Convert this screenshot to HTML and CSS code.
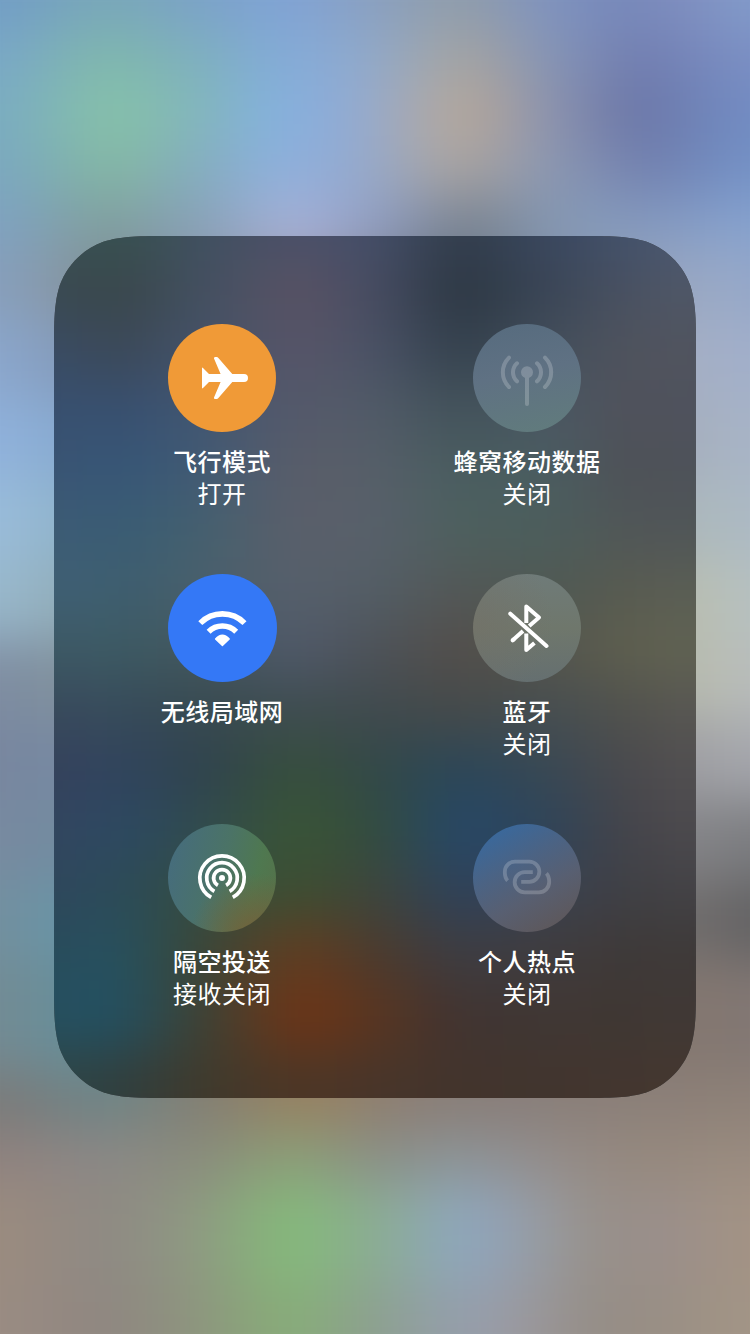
FILE: index.html
```html
<!DOCTYPE html>
<html lang="zh-CN">

<head>
    <meta charset="UTF-8" />
    <meta name="viewport" content="width=device-width, initial-scale=1.0" />
    <title>控制中心</title>
    <link rel="stylesheet" href="styles.css">
</head>

<body>
    <div class="backdrop">
        <div class="bands wallpaper">
            <div class="w1"></div>
            <div class="w2"></div>
            <div class="w3"></div>
            <div class="w4"></div>
            <div class="w5"></div>
            <div class="w6"></div>
            <div class="w7"></div>
            <div class="w8"></div>
            <div class="w9"></div>
            <div class="w10"></div>
            <div class="w11"></div>
            <div class="w12"></div>
            <div class="w13"></div>
            <div class="w14"></div>
            <div class="w15"></div>
            <div class="w16"></div>
            <div class="w17"></div>
            <div class="w18"></div>
            <div class="w19"></div>
        </div>
    </div>
    <div class="panel">
        <div class="bands tint">
            <div class="t1"></div>
            <div class="t2"></div>
            <div class="t3"></div>
            <div class="t4"></div>
            <div class="t5"></div>
            <div class="t6"></div>
            <div class="t7"></div>
            <div class="t8"></div>
            <div class="t9"></div>
            <div class="t10"></div>
            <div class="t11"></div>
            <div class="t12"></div>
            <div class="t13"></div>
            <div class="t14"></div>
            <div class="t15"></div>
        </div>
        <div class="controls">
            <div class="item">
                <div class="circle airplane">
                    <svg viewBox="0 0 108 108">
                        <path fill="#fff" d="M34 44.2Q34 43 35 43.9L41 50H52.6L46 34.6Q45.6 33 47.2 33H48.6Q49.7 33 50.4 33.9L64.3 50H76A4 4 0 0 1 76 58H64.3L50.4 74.1Q49.7 75 48.6 75H47.2Q45.6 75 46 73.4L52.6 58H41L35 64.1Q34 65 34 63.8Z" />
                    </svg>
                </div>
                <p class="name">飞行模式</p>
                <p class="state">打开</p>
            </div>
            <div class="item">
                <div class="circle cellular">
                    <svg viewBox="0 0 108 108" fill="none" stroke="#fff" stroke-width="4" stroke-linecap="round">
                        <g class="dim">
                            <circle cx="54" cy="48.3" r="4" />
                            <path d="M54 52V80M44 39.3A12.1 12.1 0 0 0 44 57.3M64 39.3A12.1 12.1 0 0 1 64 57.3M36 33.6A20.6 20.6 0 0 0 36 63M72 33.6A20.6 20.6 0 0 1 72 63" />
                            <circle cx="54" cy="48.3" r="2.5" fill="#fff" />
                        </g>
                    </svg>
                </div>
                <p class="name">蜂窝移动数据</p>
                <p class="state">关闭</p>
            </div>
            <div class="item">
                <div class="circle wifi">
                    <svg viewBox="0 0 109 108" fill="none" stroke="#fff" stroke-width="5.6">
                        <path d="M32.3 49.1A31 31 0 0 1 76.5 49.1M40.6 57.7A19.6 19.6 0 0 1 68.2 57.7" />
                        <path fill="#fff" stroke-width="1.4" stroke-linejoin="round" d="M47.6 65Q54.4 57.2 61.2 65L54.4 71.4Z" />
                    </svg>
                </div>
                <p class="name">无线局域网</p>
            </div>
            <div class="item">
                <div class="circle bluetooth">
                    <svg viewBox="0 0 108 108" fill="none" stroke="#fff" stroke-width="4" stroke-linejoin="round">
                        <path stroke-linecap="round" d="M37.3 39.7L73.5 72M39.7 66.3L41 65.1" />
                        <path d="M53.3 49V32.4L66 43.4L56.2 51.9M53.3 59.5V76.1L61.4 69.1M39.7 66.3L50 57.1" />
                    </svg>
                </div>
                <p class="name">蓝牙</p>
                <p class="state">关闭</p>
            </div>
            <div class="item">
                <div class="circle airdrop">
                    <svg viewBox="0 0 108 108" fill="none" stroke="#fff" stroke-width="3.7">
                        <circle cx="54" cy="54" r="3" fill="#fff" stroke="none" />
                        <path d="M43.2 73.4A22.2 22.2 0 1 1 64.8 73.4M46.4 67.3A15.3 15.3 0 1 1 61.6 67.3M49.9 61.3A8.4 8.4 0 1 1 58.1 61.3" />
                    </svg>
                </div>
                <p class="name">隔空投送</p>
                <p class="state">接收关闭</p>
            </div>
            <div class="item">
                <div class="circle hotspot">
                    <svg viewBox="0 0 108 108" fill="none" stroke="#fff" stroke-width="3.8">
                        <g class="dim">
                            <path d="M34.6 56.6C32.5 54.4 31.8 51.4 31.8 47.9A10.2 10.2 0 0 1 42 37.7H56.3A10.05 10.05 0 0 1 56.3 57.8H48.2" />
                            <path transform="rotate(180 54 53)" d="M34.6 56.6C32.5 54.4 31.8 51.4 31.8 47.9A10.2 10.2 0 0 1 42 37.7H56.3A10.05 10.05 0 0 1 56.3 57.8H48.2" />
                        </g>
                    </svg>
                </div>
                <p class="name">个人热点</p>
                <p class="state">关闭</p>
            </div>
        </div>
    </div>
</body>

</html>
```
FILE: styles.css
```css
* {
    margin: 0;
    padding: 0;
    box-sizing: border-box;
}

body {
    position: relative;
    width: 750px;
    height: 1334px;
    padding: 236px 54px;
    overflow: hidden;
    background: #8a8f98;
    font-family: "Noto Sans CJK SC", sans-serif;
    color: white;
}

.backdrop {
    position: absolute;
    top: 0;
    left: 0;
    width: 100%;
    height: 100%;
    overflow: hidden;
}

/* stacked colour bands, wider than the parent so the blurred rim stays hidden */
.bands {
    position: absolute;
    top: -60px;
    bottom: -60px;
    left: -8.14%;
    right: -8.14%;
    display: flex;
    flex-direction: column;
    filter: blur(26px);
}

.wallpaper div {
    height: 80px;
}

.wallpaper .w1 {
    height: 90px;
    background: linear-gradient(90deg, #729dc6 7%, #79a8b8 20%, #7ba2c8 30%, #80a3d6 40%, #88a0c4 48%, #909da9 59.5%, #7f93c0 70%, #7688ba 78%, #808fc0 86%, #829cca 93%);
}

.wallpaper .w2 {
    height: 55px;
    background: linear-gradient(90deg, #7aa8c7 7%, #80b8ab 19%, #7eb0bd 29.5%, #83abd8 39%, #8daad0 47.4%, #a6a4a0 60.3%, #8494b6 70.5%, #717db0 80%, #7b8fc4 93%);
}

.wallpaper .w3 {
    height: 55px;
    background: linear-gradient(90deg, #7aacc1 7%, #87c3a8 20%, #82b6bb 30%, #83b2df 38%, #90aad6 46.6%, #b9a896 60.3%, #8c93ae 70%, #6a75a6 79.5%, #728cc3 93%);
}

.wallpaper .w4 {
    height: 55px;
    background: linear-gradient(90deg, #7ba8c0 7%, #84b8a2 20%, #84adc0 30%, #8db0de 39%, #93aad0 47.4%, #aba49f 59.5%, #8c98b2 70%, #717fae 81%, #7391c6 93%);
}

.wallpaper .w5 {
    height: 55px;
    background: linear-gradient(90deg, #7fa2c2 7%, #809f9d 19%, #87a1b8 30%, #a7b2da 40.5%, #8e9cc0 51%, #79828e 60.3%, #8599b5 71.5%, #8399c0 82.7%, #86a2cf 93%);
}

.wallpaper .w6 {
    height: 70px;
    background: linear-gradient(90deg, #879fbc 7%, #8795a0 15.6%, #7c8a90 19%, #8e98ae 31%, #a59fb4 41.4%, #65727f 58.6%, #8998b0 72.4%, #9ba9c4 87%, #94a7c9 93%);
}

.wallpaper .w7 {
    background: linear-gradient(90deg, #8ba7cd 7%, #8399b8 15.6%, #a5afc4 87%, #a1afcb 93%);
}

.wallpaper .w8 {
    background: linear-gradient(90deg, #90b2dc 7%, #86a9cf 15.6%, #a6afbd 87%, #a8b5c8 93%);
}

.wallpaper .w9 {
    background: linear-gradient(90deg, #9abddb 7%, #8eb2c9 15.6%, #adb8bb 87%, #acbac5 93%);
}

.wallpaper .w10 {
    background: linear-gradient(90deg, #99b8cc 7%, #90acb7 15.6%, #b9beb0 87%, #b6c1c2 93%);
}

.wallpaper .w11 {
    background: linear-gradient(90deg, #7f8da2 7%, #80929c 15.6%, #b8bbae 87%, #b8bdbc 93%);
}

.wallpaper .w12 {
    background: linear-gradient(90deg, #78869f 7%, #7689a2 15.6%, #a0a0a4 87%, #a5a7ad 93%);
}

.wallpaper .w13 {
    background: linear-gradient(90deg, #788aa0 7%, #718ba0 15.6%, #848487 87%, #7b7c80 93%);
}

.wallpaper .w14 {
    background: linear-gradient(90deg, #73909f 7%, #6695a8 15.6%, #706c6b 87%, #626264 93%);
}

.wallpaper .w15 {
    height: 110px;
    background: linear-gradient(90deg, #738b94 7%, #61909c 19%, #7f7b70 29.4%, #98785f 41.4%, #88807c 58.6%, #83766f 87%, #827874 93%);
}

.wallpaper .w16 {
    height: 60px;
    background: linear-gradient(90deg, #7b7a79 7%, #6e8486 19%, #837f74 30%, #98835f 42%, #8c7e74 52.6%, #887e7a 63%, #8e8178 93%);
}

.wallpaper .w17 {
    height: 55px;
    background: linear-gradient(90deg, #90827f 7%, #8b8886 19%, #8a8c7c 30%, #8ba078 40.5%, #8b8f86 50%, #8c9498 59.5%, #948c89 70.6%, #95887d 80%, #9a8c80 93%);
}

.wallpaper .w18 {
    height: 100px;
    background: linear-gradient(90deg, #9b8b7f 7%, #8e8984 19%, #8f9782 28.5%, #84bb79 40.5%, #8bad8f 49%, #8ea6c0 60.3%, #979ba2 69%, #979089 75%, #998e8b 81.8%, #a39384 93%);
}

.wallpaper .w19 {
    flex: 1;
    background: linear-gradient(90deg, #9a8c82 7%, #8f8681 19%, #8e937f 28.5%, #87ae78 40.5%, #8ca08d 49%, #959eae 60.3%, #9b9aa0 66.3%, #958e88 74%, #988e84 81.8%, #a39586 93%);
}

.panel {
    position: relative;
    width: 642px;
    height: 862px;
    overflow: hidden;
    background: #46494c;
    clip-path: path("M119.2 0H522.8C557.1 0 574.3 0 592.7 5.8C612.9 13.2 628.8 29.1 636.2 49.3C642 67.7 642 84.9 642 119.2V742.8C642 777.1 642 794.3 636.2 812.7C628.8 832.9 612.9 848.8 592.7 856.2C574.3 862 557.1 862 522.8 862H119.2C84.9 862 67.7 862 49.3 856.2C29.1 848.8 13.2 832.9 5.8 812.7C0 794.3 0 777.1 0 742.8V119.2C0 84.9 0 67.7 5.8 49.3C13.2 29.1 29.1 13.2 49.3 5.8C67.7 0 84.9 0 119.2 0Z");
}

/* darkened colours of the wallpaper seen through the panel */
.tint div {
    height: 60px;
}

.tint .t1 {
    height: 84px;
    background: linear-gradient(90deg, #3a5058 7%, #37524f 15.6%, #3f5060 26%, #4b5069 39%, #444f6a 50%, #323d4b 61.2%, #3a4860 73.2%, #44526c 84.4%, #4b5973 93%);
}

.tint .t2 {
    background: linear-gradient(90deg, #3b4a52 7%, #394649 15.6%, #435061 27%, #5a5264 39.6%, #464c62 50%, #2b3641 61.2%, #3a4556 73.2%, #4a5262 84.4%, #505868 93%);
}

.tint .t3 {
    background: linear-gradient(90deg, #3a4c64 7%, #3b4857 15.6%, #435269 26%, #585568 39.6%, #4a5266 50%, #33404c 61.2%, #434f5c 73.2%, #50535d 84.4%, #50545f 93%);
}

.tint .t4 {
    background: linear-gradient(90deg, #385070 7%, #374f70 15.6%, #405672 26%, #55596a 39.6%, #515b68 50%, #42525a 61.2%, #4b5864 73.2%, #50515a 84.4%, #4f535e 93%);
}

.tint .t5 {
    background: linear-gradient(90deg, #3a5574 7%, #365677 15.6%, #405a74 26%, #5a5d69 39.6%, #565f69 50%, #495d5f 61.2%, #4a5d61 73.2%, #4e5056 84.4%, #4e535a 93%);
}

.tint .t6 {
    background: linear-gradient(90deg, #3d5c75 7%, #395c74 15.6%, #43606f 26%, #5b5f6a 39.6%, #58606b 50%, #4d605e 61.2%, #4c5e5c 73.2%, #515657 84.4%, #505658 93%);
}

.tint .t7 {
    background: linear-gradient(90deg, #406075 7%, #3d5e6f 15.6%, #485f6c 26%, #575f6b 39.6%, #535e66 50%, #535756 61.2%, #4f5954 73.2%, #595b50 84.4%, #5b5f56 93%);
}

.tint .t8 {
    background: linear-gradient(90deg, #3d5965 7%, #3c5a63 15.6%, #43575e 26%, #50596a 39.6%, #4d5258 50%, #534e4a 61.2%, #55554d 73.2%, #5f604f 84.4%, #616353 93%);
}

.tint .t9 {
    background: linear-gradient(90deg, #394a5c 7%, #374b5b 15.6%, #374950 26%, #3f4d50 39.6%, #404a4e 50%, #454a4a 61.2%, #464e51 73.2%, #52524d 84.4%, #595854 93%);
}

.tint .t10 {
    background: linear-gradient(90deg, #35425c 7%, #30435e 15.6%, #2f424f 26%, #374f3b 39.6%, #334848 50%, #2a4659 61.2%, #384854 73.2%, #4b494c 84.4%, #525052 93%);
}

.tint .t11 {
    background: linear-gradient(90deg, #33465f 7%, #2c4964 15.6%, #304b50 26%, #3a5535 39.6%, #334c3f 50%, #25486a 61.2%, #2e4459 73.2%, #464449 84.4%, #4d4b4f 93%);
}

.tint .t12 {
    background: linear-gradient(90deg, #2f475c 7%, #2b4b59 15.6%, #344c43 26%, #3d4f31 39.6%, #3e453c 50%, #2d425d 61.2%, #3a4150 73.2%, #404044 84.4%, #444347 93%);
}

.tint .t13 {
    background: linear-gradient(90deg, #294c5b 7%, #265160 15.6%, #384739 26%, #633d20 39.6%, #4b3b2e 50%, #3c3d44 61.2%, #403d3f 73.2%, #3e3938 84.4%, #3e3a39 93%);
}

.tint .t14 {
    height: 70px;
    background: linear-gradient(90deg, #265060 7%, #225062 15.6%, #3b4337 26%, #703415 39.6%, #593520 50%, #403432 61.2%, #403734 73.2%, #3f3733 84.4%, #413936 93%);
}

.tint .t15 {
    flex: 1;
    background: linear-gradient(90deg, #2f4545 7%, #303f3f 15.6%, #3e3a2d 26%, #4d3625 39.6%, #48352a 50%, #42342c 61.2%, #41352e 73.2%, #43362f 84.4%, #45382f 93%);
}

.controls {
    position: relative;
    display: grid;
    grid-template-columns: 305px 305px;
    grid-auto-rows: 250px;
    padding: 88px 0 0 15.5px;
}

.item {
    display: flex;
    flex-direction: column;
    align-items: center;
    text-align: center;
    font-size: 24px;
    line-height: 32px;
    letter-spacing: 0.5px;
}

.circle {
    width: 108px;
    height: 108px;
    margin-bottom: 13px;
    border-radius: 50%;
}

.circle svg {
    display: block;
    width: 100%;
    height: 100%;
}

.airplane {
    background: #f09a37;
}

.cellular {
    background: linear-gradient(168deg, #566b7e, #5f7183 45%, #617c7c);
}

.wifi {
    width: 109px;
    margin-left: 1px;
    background: #3478f6;
}

.bluetooth {
    background: radial-gradient(circle at 0% 45%, rgba(116, 112, 103, 0.6), rgba(116, 112, 103, 0) 65%), linear-gradient(180deg, #6f7b79, #6f776c 50%, #656f70);
}

.airdrop {
    background: radial-gradient(circle at 80% 105%, #75603a, rgba(117, 96, 58, 0) 45%), linear-gradient(105deg, #466d7b 10%, #4b7366 48%, #4f7850 75%, #567048);
}

.hotspot {
    background: linear-gradient(150deg, #3a689b 12%, #4b6384 38%, #585f71 62%, #5d585c 88%);
}

.dim {
    opacity: 0.2;
}

.name {
    font-weight: 500;
}

.state {
    font-weight: 400;
}
```
